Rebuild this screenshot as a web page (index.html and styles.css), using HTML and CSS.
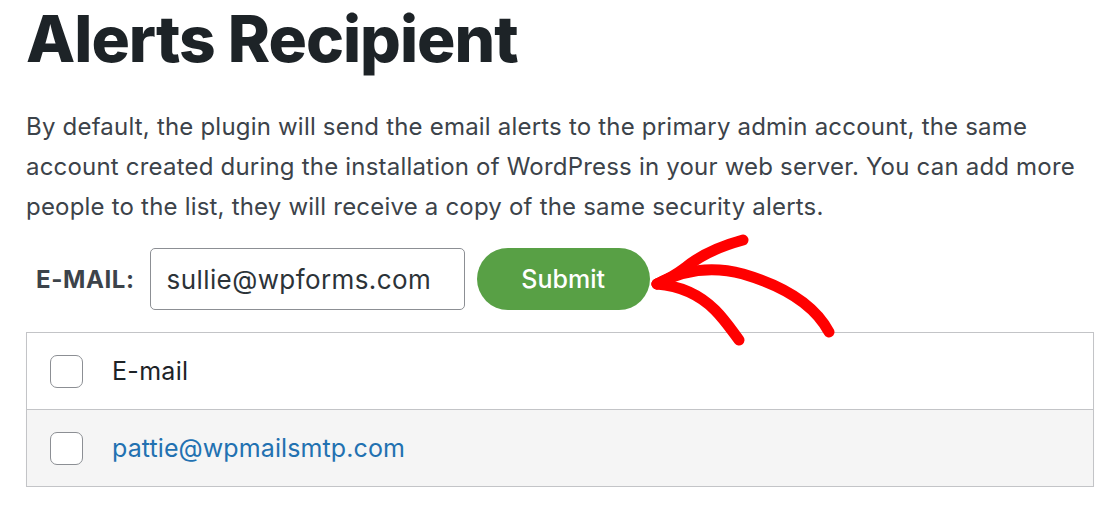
FILE: index.html
```html
<!DOCTYPE html>
<html lang="en">
<head>
<meta charset="utf-8">
<title>Alerts Recipient</title>
<link rel="stylesheet" href="styles.css">
</head>
<body>
<main class="page">
  <h1 class="title">Alerts Recipient</h1>
  <p class="intro">By default, the plugin will send the email alerts to the primary admin account, the same account created during the installation of WordPress in your web server. You can add more people to the list, they will receive a copy of the same security alerts.</p>
  <form class="add-form">
    <label class="label" for="email">E-MAIL:</label>
    <input class="email-input" id="email" type="text" value="sullie@wpforms.com">
    <button class="submit" type="button">Submit</button>
    <svg class="arrow" width="200" height="120" viewBox="0 0 200 120" fill="none" stroke="#ff0000" stroke-width="11" stroke-linecap="round" stroke-linejoin="round">
      <path d="M106 14 C 84 20, 62 30, 48 42 C 40 48, 30 54, 20 58"/>
      <path d="M20 58 C 46 44, 76 40, 106 48 C 140 58, 176 76, 192 106"/>
      <path d="M20 58 C 44 60, 64 70, 78 84 C 88 94, 96 106, 102 114"/>
    </svg>
  </form>
  <div class="recipients">
    <div class="row row-head">
      <span class="check"></span>
      <span class="head-text">E-mail</span>
    </div>
    <div class="row row-alt">
      <span class="check"></span>
      <a class="link" href="#">pattie@wpmailsmtp.com</a>
    </div>
  </div>
</main>
</body>
</html>
```

FILE: styles.css
```css
html, body {
  margin: 0;
  padding: 0;
  background: #ffffff;
}

.page {
  padding: 0 20px 0 26px;
  font-family: Inter, "Liberation Sans", sans-serif;
  color: #3c434a;
}

.title {
  margin: 0;
  padding-top: 1px;
  font-size: 64px;
  line-height: 76px;
  font-weight: 800;
  color: #1d2327;
  letter-spacing: -1px;
}

.intro {
  margin: 30px 0 0 0;
  font-size: 24px;
  line-height: 40px;
  letter-spacing: 0.2px;
  color: #3c434a;
  max-width: 1070px;
}

.add-form {
  position: relative;
  display: flex;
  align-items: center;
  margin-top: 21px;
  height: 62px;
}

.label {
  font-size: 24px;
  font-weight: 700;
  letter-spacing: 0.6px;
  color: #3c434a;
  margin-left: 10px;
  margin-right: 15px;
}

.email-input {
  box-sizing: border-box;
  width: 315px;
  height: 62px;
  padding: 0 16px;
  border: 1px solid #8c8f94;
  border-radius: 5px;
  font-family: Inter, "Liberation Sans", sans-serif;
  font-size: 26px;
  letter-spacing: 0.4px;
  color: #2c3338;
  background: #fff;
}

.submit {
  box-sizing: border-box;
  margin-left: 12px;
  width: 173px;
  height: 62px;
  border: none;
  border-radius: 31px;
  background: #58a045;
  color: #ffffff;
  font-family: Inter, "Liberation Sans", sans-serif;
  font-size: 25px;
  font-weight: 500;
}

.arrow {
  position: absolute;
  left: 611px;
  top: -22px;
}

.recipients {
  margin-top: 22px;
  width: 1066px;
  border: 1px solid #c3c4c7;
  box-shadow: 0 1px 1px rgba(0, 0, 0, 0.04);
}

.row {
  display: flex;
  align-items: center;
  height: 76px;
  padding-left: 23px;
}

.row-head {
  background: #ffffff;
  border-bottom: 1px solid #c3c4c7;
}

.row-alt {
  background: #f5f5f5;
}

.check {
  box-sizing: border-box;
  width: 33px;
  height: 33px;
  border: 1px solid #8c8f94;
  border-radius: 7px;
  background: #ffffff;
  margin-right: 29px;
}

.head-text {
  font-size: 25px;
  letter-spacing: 0.3px;
  color: #1d2327;
}

.link {
  font-size: 25px;
  letter-spacing: 0.1px;
  color: #2271b1;
  text-decoration: none;
}
```
